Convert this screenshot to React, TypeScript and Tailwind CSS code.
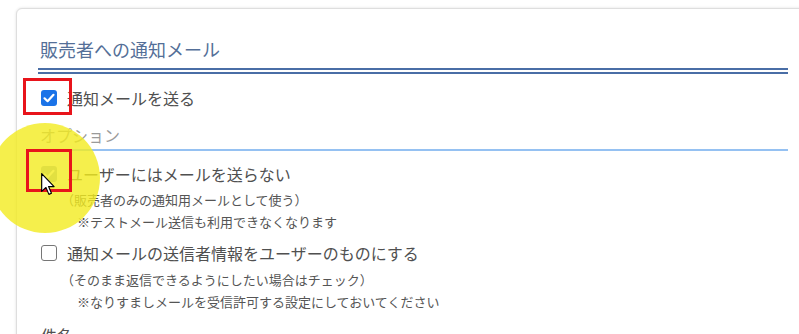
import React from 'react';

const font = { fontFamily: '"Noto Sans CJK JP", "Noto Sans", sans-serif' };

const CheckMark: React.FC = () => (
  <svg viewBox="0 0 16 16" className="w-4 h-4">
    <path d="M3.5 8.3 L6.6 11.2 L12.5 4.8" fill="none" stroke="white" strokeWidth="2.2" strokeLinecap="round" strokeLinejoin="round" />
  </svg>
);

const Box: React.FC<{ state: 'on' | 'dim' | 'off' }> = ({ state }) => {
  if (state === 'on') {
    return (
      <div className="w-4 h-4 rounded-[3px] bg-[#1a73e8] flex items-center justify-center shrink-0">
        <CheckMark />
      </div>
    );
  }
  if (state === 'dim') {
    return (
      <div className="w-4 h-4 rounded-[3px] bg-[#9fb3c8] flex items-center justify-center shrink-0">
        <CheckMark />
      </div>
    );
  }
  return <div className="w-4 h-4 rounded-[3px] border border-[#767676] bg-white shrink-0" />;
};

const Row: React.FC<{ state: 'on' | 'dim' | 'off'; label: string; className?: string }> = ({ state, label, className }) => (
  <div className={`flex items-center h-4 pl-[3px] gap-[10px] ${className ?? ''}`}>
    <Box state={state} />
    <span className="text-[16px] leading-4 text-[#505050] whitespace-nowrap">{label}</span>
  </div>
);

export default function App() {
  return (
    <div className="relative w-[799px] h-[334px] overflow-hidden bg-white pt-2 pl-4" style={font}>
      <div className="w-[830px] h-[400px] border border-[#dedede] rounded-tl-md shadow-[0_0_3px_rgba(0,0,0,0.12)] pl-[21px] pt-[27px] bg-white">
        <div className="w-[750px] border-b-[6px] border-double border-[#4a6ea6] pb-[6px]">
          <h2 className="pl-[2px] text-[18px] leading-[26px] text-[#546f98] font-normal">販売者への通知メール</h2>
        </div>

        <Row state="on" label="通知メールを送る" className="mt-[16px]" />

        <div className="w-[750px] mt-[17px] pb-[2px] border-b-2 border-[#95c1f2]">
          <h3 className="pl-[2px] text-[16px] leading-6 text-[#9a9a9a]">オプション</h3>
        </div>

        <Row state="dim" label="ユーザーにはメールを送らない" className="mt-[15px]" />
        <p className="mt-[7px] pl-[23px] text-[13px] leading-[22px] text-[#555]">（販売者のみの通知用メールとして使う）</p>
        <p className="pl-[39px] text-[13px] leading-[22px] text-[#555]">※テストメール送信も利用できなくなります</p>

        <Row state="off" label="通知メールの送信者情報をユーザーのものにする" className="mt-[12px]" />
        <p className="mt-[8px] pl-[23px] text-[13px] leading-[22px] text-[#555]">（そのまま返信できるようにしたい場合はチェック）</p>
        <p className="pl-[39px] text-[13px] leading-[22px] text-[#555]">※なりすましメールを受信許可する設定にしておいてください</p>

        <h3 className="mt-[10px] pl-[3px] text-[16px] leading-6 text-[#505050]">件名</h3>
      </div>

      {/* click highlight */}
      <div className="absolute left-[-10px] top-[123px] w-[110px] h-[110px] rounded-full bg-[#f3eb1f]/80" />

      {/* red callouts */}
      <div className="absolute left-[23px] top-[78px] w-[49px] h-[37px] border-[3px] border-[#e8141b]" />
      <div className="absolute left-[26px] top-[149px] w-[46px] h-[43px] border-[3px] border-[#e8141b]" />

      {/* pointer */}
      <svg className="absolute left-[41px] top-[173px]" width="14" height="23" viewBox="0 0 12 20">
        <path d="M0.5 0.5 L0.5 16 L4.2 12.6 L6.8 18.6 L9 17.6 L6.5 11.8 L11.3 11.8 Z" fill="white" stroke="black" strokeWidth="1" strokeLinejoin="round" />
      </svg>
    </div>
  );
}
